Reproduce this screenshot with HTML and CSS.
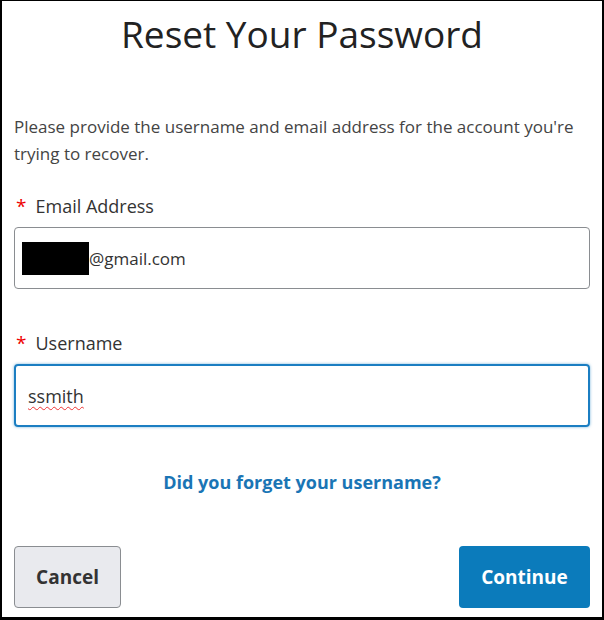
FILE: index.html
```html
<!DOCTYPE html>
<html lang="en">
<head>
  <meta charset="UTF-8" />
  <title>Reset Your Password</title>
  <link rel="stylesheet" href="styles.css">
</head>
<body>
  <div class="reset-container">
    <h1>Reset Your Password</h1>

    <p class="intro">Please provide the username and email address for the account you're trying to recover.</p>

    <label class="field-label" for="email"><span class="req">*</span>Email Address</label>
    <div class="field">
      <span class="redacted"></span><span class="value">@gmail.com</span>
    </div>

    <label class="field-label" for="username"><span class="req">*</span>Username</label>
    <div class="field focused">
      <span class="value spell">ssmith</span>
    </div>

    <a class="forgot-link" href="#">Did you forget your username?</a>

    <div class="actions">
      <button class="btn btn-cancel">Cancel</button>
      <button class="btn btn-continue">Continue</button>
    </div>
  </div>
</body>
</html>
```

FILE: styles.css
```css
html, body {
  margin: 0;
  padding: 0;
}

body {
  font-family: 'Open Sans', 'Noto Sans', sans-serif;
  background: white;
  color: #333;
}

.reset-container {
  box-sizing: border-box;
  width: 604px;
  height: 620px;
  border: 2px solid #000;
  border-top-width: 1px;
  border-bottom-width: 3px;
  padding: 13px 12px 0 12px;
}

h1 {
  font-size: 37px;
  font-weight: 400;
  line-height: 40px;
  color: #222;
  text-align: center;
  margin: 0;
}

.intro {
  font-size: 17px;
  line-height: 27px;
  color: #444;
  margin: 59px 0 0;
}

.field-label {
  display: block;
  font-size: 18px;
  line-height: 24px;
  color: #333;
  margin-top: 27px;
}

.field-label + .field {
  margin-top: 9px;
}

.field + .field-label {
  margin-top: 42px;
}

.req {
  color: #e00;
  font-size: 19px;
  margin: 0 9px 0 2px;
}

.field {
  box-sizing: border-box;
  height: 62px;
  border: 1px solid #8a8d91;
  border-radius: 4px;
  display: flex;
  align-items: center;
  padding: 0 7px;
  font-size: 17px;
  color: #333;
}

.field.focused {
  border: 2px solid #1b7ec2;
  box-shadow: 0 0 3px rgba(27, 126, 194, 0.6);
  padding: 0 12px;
  height: 63px;
  font-size: 18px;
}

.redacted {
  display: inline-block;
  width: 67px;
  height: 33px;
  background: #000;
}

.spell {
  text-decoration: underline wavy #e33;
  text-decoration-thickness: 1px;
  text-underline-offset: 3px;
}

.forgot-link {
  display: block;
  text-align: center;
  font-size: 18px;
  font-weight: 700;
  color: #1a75b5;
  text-decoration: none;
  margin-top: 43px;
  line-height: 24px;
}

.actions {
  display: flex;
  justify-content: space-between;
  margin-top: 52px;
}

.btn {
  font-family: inherit;
  font-size: 19px;
  font-weight: 700;
  height: 62px;
  border-radius: 4px;
  cursor: pointer;
}

.btn-cancel {
  width: 107px;
  background: #e9eaee;
  border: 1px solid #8a8d91;
  color: #333;
}

.btn-continue {
  width: 131px;
  background: #0b7bbb;
  border: none;
  color: white;
}
```
